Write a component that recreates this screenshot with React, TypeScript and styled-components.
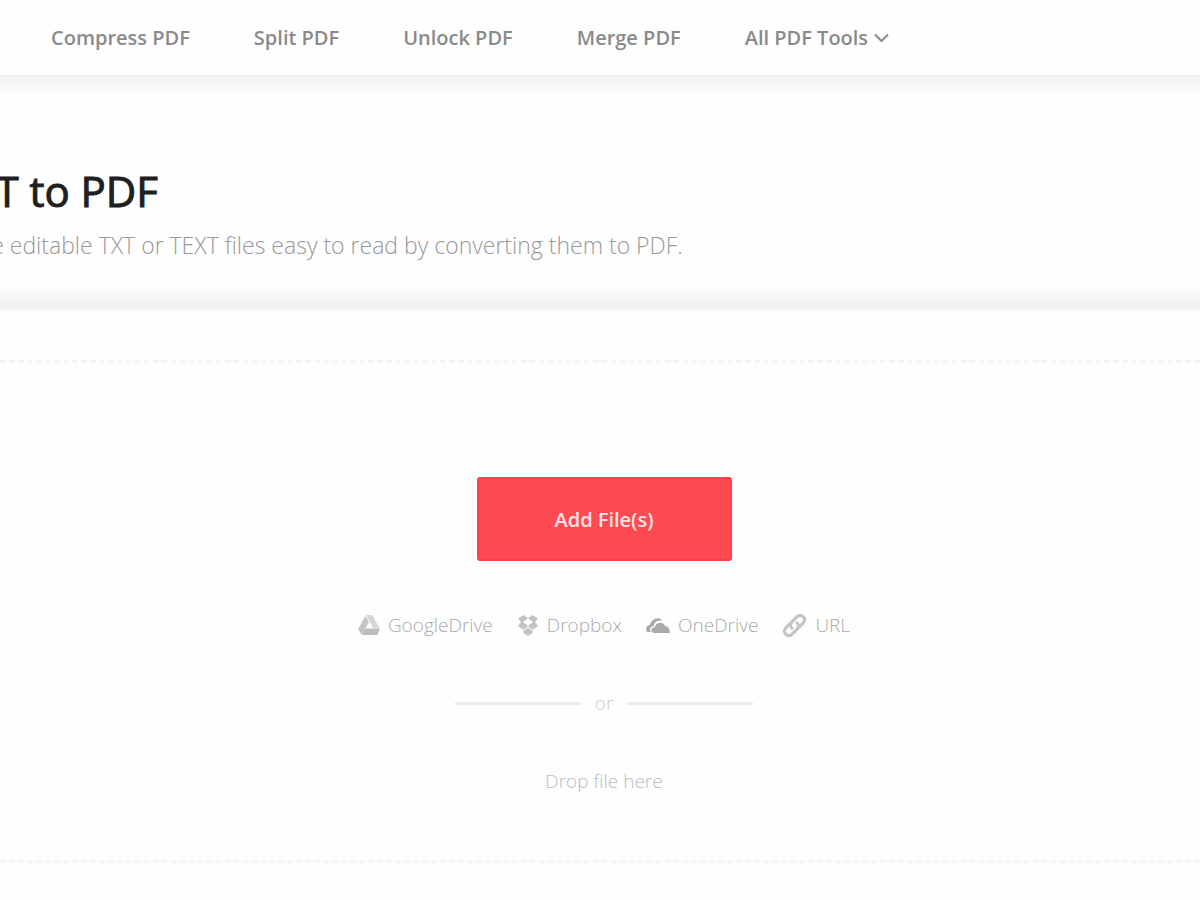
import React from "react";
import styled, { createGlobalStyle } from "styled-components";

const GlobalStyle = createGlobalStyle`
  * { box-sizing: border-box; }
  body {
    margin: 0;
    background: #fefefe;
    font-family: "Open Sans", "Noto Sans", sans-serif;
  }
`;

const Page = styled.div`
  overflow: hidden;
`;

const NavBar = styled.nav`
  display: flex;
  align-items: center;
  gap: 64px;
  padding: 24px 0 23px 51px;
`;

const NavLink = styled.a`
  display: inline-flex;
  align-items: center;
  gap: 6px;
  color: #8a8a8a;
  font-size: 20px;
  font-weight: 600;
  line-height: 28px;
  text-decoration: none;
  white-space: nowrap;
`;

const Hero = styled.header`
  padding: 86px 0 47px;
  border-top: 6px solid #f3f3f3;
  border-bottom: 3px solid #f8f8f8;
  background:
    linear-gradient(to bottom, #f6f6f6, #fefefe) top / 100% 20px no-repeat,
    linear-gradient(to top, #efefef, #fefefe) bottom / 100% 24px no-repeat,
    #fefefe;
`;

const HeroText = styled.div`
  margin-left: -52px;
`;

const Title = styled.h1`
  margin: 0;
  color: #202022;
  font-size: 42px;
  font-weight: 500;
  line-height: 48px;
  white-space: nowrap;
  -webkit-text-stroke: 1px #202022;
`;

const Subtitle = styled.p`
  margin: 13px 0 0;
  color: #989898;
  font-size: 23px;
  font-weight: 300;
  line-height: 34px;
  white-space: nowrap;
`;

const DropZone = styled.main`
  display: flex;
  flex-direction: column;
  align-items: center;
  margin-top: 48px;
  padding: 114px 0 65px 8px;
  border-top: 3px dashed #f5f5f5;
  border-bottom: 3px dashed #f5f5f5;
`;

const AddButton = styled.button`
  width: 255px;
  height: 84px;
  border: 2px solid #ff3f48;
  border-radius: 3px;
  background: #ff4a53;
  color: #ffe4e5;
  font-family: inherit;
  font-size: 20px;
  font-weight: 600;
`;

const Sources = styled.div`
  display: flex;
  gap: 24px;
  margin-top: 48px;
`;

const Source = styled.button`
  display: flex;
  align-items: center;
  gap: 8px;
  padding: 0;
  border: 0;
  background: none;
  color: #aaaaaa;
  font-family: inherit;
  font-size: 19px;
  font-weight: 300;
  line-height: 32px;

  svg { flex: none; }
`;

const Divider = styled.div`
  display: flex;
  align-items: center;
  gap: 14px;
  width: 298px;
  margin-top: 48px;
  color: #c8c8c8;
  font-size: 19px;
  font-weight: 300;
  line-height: 28px;
`;

const Rule = styled.span`
  flex: 1;
  height: 3px;
  background: #ececec;
`;

const DropHint = styled.p`
  margin: 50px 0 0;
  color: #bcbcbc;
  font-size: 19px;
  font-weight: 300;
  line-height: 28px;
`;

const ChevronIcon = () => (
  <svg width="15" height="10" viewBox="0 0 15 10" fill="none" stroke="currentColor" strokeWidth="2" aria-hidden="true">
    <path d="M1 1.5 7.500 8 14 1.5" />
  </svg>
);

const DriveIcon = () => (
  <svg width="22" height="22" viewBox="0 0 22 22" aria-hidden="true">
    <path d="M7.500 2 0 15l3.500 5.500L11 8Z" fill="#c4c4c4" />
    <path d="M8 1h6l7.500 13h-6.500Z" fill="#d6d6d6" />
    <path d="M7 14.500h15L19.500 21H3.500Z" fill="#bdbdbd" />
  </svg>
);

const DropboxIcon = () => (
  <svg width="22" height="23" viewBox="0 0 22 23" fill="#c2c2c2" aria-hidden="true">
    <path d="M6.500 1 11 4.500 6 8l5 4-4.500 4L1 12l3-4-3-3.500ZM15.500 1 11 4.500 16 8l-5 4 4.500 4L21 12l-3-4 3-3.500ZM11 13.500l4.500 3.500v2L11 22l-4.500-3v-2Z" />
  </svg>
);

const OneDriveIcon = () => (
  <svg width="24" height="18" viewBox="0 0 24 18" fill="#aaaaaa" aria-hidden="true">
    <path d="M1 16c-2-4 0-7 3-7 1-5 7-9 12-5l-3 1c-3 0-5 2-5 5-3 0-5 3-3 6Z" />
    <path d="M8 17c-4-1-3-6 1-6 1-5 8-6 10-1 3 0 5 3 5 7Z" />
  </svg>
);

const LinkIcon = () => (
  <svg width="25" height="25" viewBox="0 0 24 24" fill="none" stroke="#c4c4c4" strokeWidth="3" strokeLinecap="round" aria-hidden="true">
    <path d="M9.500 14.500c-2-2-1.500-4.500 0-6l5-5c4-3.500 9.500 1.500 6 6l-4 4" />
    <path d="M14.500 9.500c2 2 1.500 4.500 0 6l-5 5c-4 3.500-9.500-1.500-6-6l4-4" />
  </svg>
);

const links = ["Compress PDF", "Split PDF", "Unlock PDF", "Merge PDF"];

export default function App() {
  return (
    <>
      <GlobalStyle />
      <Page>
        <NavBar>
          {links.map((label) => (
            <NavLink href="#" key={label}>{label}</NavLink>
          ))}
          <NavLink href="#">All PDF Tools <ChevronIcon /></NavLink>
        </NavBar>
        <Hero>
          <HeroText>
            <Title>TXT to PDF</Title>
            <Subtitle>Make editable TXT or TEXT files easy to read by converting them to PDF.</Subtitle>
          </HeroText>
        </Hero>
        <DropZone>
          <AddButton type="button">Add File(s)</AddButton>
          <Sources>
            <Source type="button"><DriveIcon />GoogleDrive</Source>
            <Source type="button"><DropboxIcon />Dropbox</Source>
            <Source type="button"><OneDriveIcon />OneDrive</Source>
            <Source type="button"><LinkIcon />URL</Source>
          </Sources>
          <Divider><Rule />or<Rule /></Divider>
          <DropHint>Drop file here</DropHint>
        </DropZone>
      </Page>
    </>
  );
}
